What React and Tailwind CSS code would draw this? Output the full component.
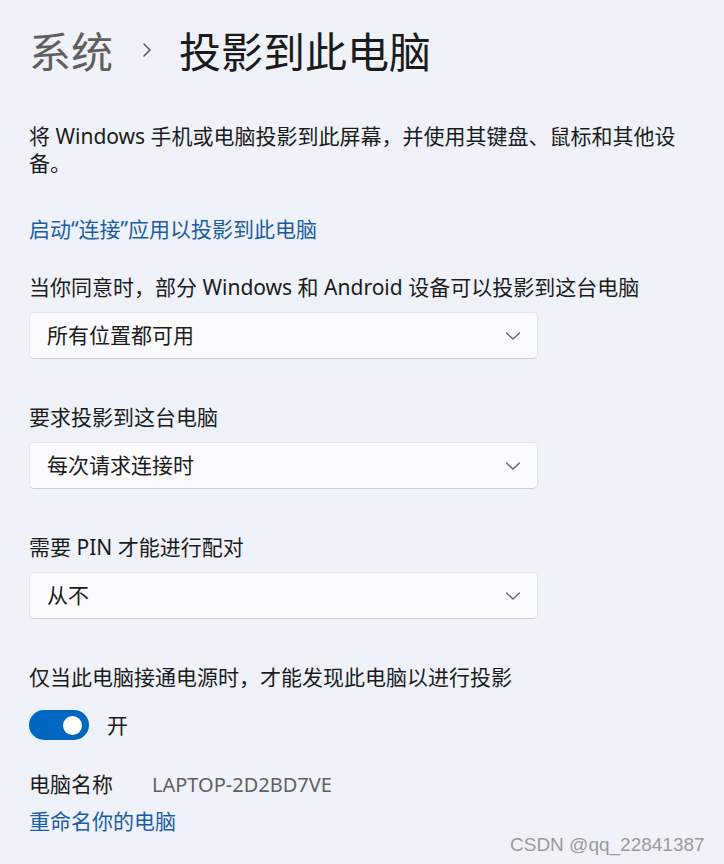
import React from "react";

const font = {
  fontFamily: '"Segoe UI", "Noto Sans", "Noto Sans CJK SC", sans-serif',
};

function Chevron() {
  return (
    <svg width="16" height="10" viewBox="0 0 16 10" fill="none">
      <path d="M1.5 2 L8 8 L14.5 2" stroke="#606060" strokeWidth="1.3" strokeLinecap="round" strokeLinejoin="round" />
    </svg>
  );
}

function Select({ value }) {
  return (
    <div className="flex h-[47px] w-[509px] items-center justify-between rounded-[5px] border border-[#e2e4e9] border-b-[#cbcdd2] bg-[#fbfbfd] pl-[17px] pr-[16px]">
      <span className="text-[21px] leading-[27px] text-[#1b1b1b]">{value}</span>
      <Chevron />
    </div>
  );
}

export default function App() {
  return (
    <div className="relative h-[864px] w-[724px] overflow-hidden bg-[#eff3f9]" style={font}>
      <div className="px-[29px] pt-[28px]">
        <div className="flex items-center text-[42px] leading-[48px]">
          <span className="text-[#5f5f5f]">系统</span>
          <span className="ml-[28px] mr-[26px] mb-[4px] text-[#5f5f5f]">
            <svg width="12" height="16" viewBox="0 0 12 16" fill="none">
              <path d="M3 2 L9 8 L3 14" stroke="#5f5f5f" strokeWidth="1.6" strokeLinecap="round" strokeLinejoin="round" />
            </svg>
          </span>
          <span className="text-[#1b1b1b]">投影到此电脑</span>
        </div>

        <p className="mt-[47px] w-[655px] text-[21px] leading-[27px] text-[#1b1b1b]">
          将 Windows 手机或电脑投影到此屏幕，并使用其键盘、鼠标和其他设备。
        </p>

        <a className="mt-[39px] block text-[21px] leading-[27px] text-[#1a5ca6]">
          启动“连接”应用以投影到此电脑
        </a>

        <div className="mt-[31px] text-[21px] leading-[27px] text-[#1b1b1b]">
          当你同意时，部分 Windows 和 Android 设备可以投影到这台电脑
        </div>
        <div className="mt-[11px]">
          <Select value="所有位置都可用" />
        </div>

        <div className="mt-[45px] text-[21px] leading-[27px] text-[#1b1b1b]">要求投影到这台电脑</div>
        <div className="mt-[11px]">
          <Select value="每次请求连接时" />
        </div>

        <div className="mt-[45px] text-[21px] leading-[27px] text-[#1b1b1b]">需要 PIN 才能进行配对</div>
        <div className="mt-[11px]">
          <Select value="从不" />
        </div>

        <div className="mt-[45px] text-[21px] leading-[27px] text-[#1b1b1b]">
          仅当此电脑接通电源时，才能发现此电脑以进行投影
        </div>
        <div className="mt-[19px] flex items-center">
          <div className="flex h-[30px] w-[60px] items-center justify-end rounded-full bg-[#0067c0] pr-[7px]">
            <div className="h-[19px] w-[19px] rounded-full bg-white" />
          </div>
          <span className="ml-[18px] text-[21px] leading-[27px] text-[#1b1b1b]">开</span>
        </div>

        <div className="mt-[31px] flex items-center text-[21px] leading-[27px]">
          <span className="w-[123px] text-[#1b1b1b]">电脑名称</span>
          <span className="text-[20px] text-[#5f5f5f]">LAPTOP-2D2BD7VE</span>
        </div>
        <a className="mt-[10px] block text-[21px] leading-[27px] text-[#1a5ca6]">重命名你的电脑</a>
      </div>

      <div
        className="absolute left-[510px] top-[833px] text-[19px] leading-[24px] text-[#9a9a9a]"
        style={{ fontFamily: '"Liberation Sans", Arial, sans-serif' }}
      >
        CSDN @qq_22841387
      </div>
    </div>
  );
}
